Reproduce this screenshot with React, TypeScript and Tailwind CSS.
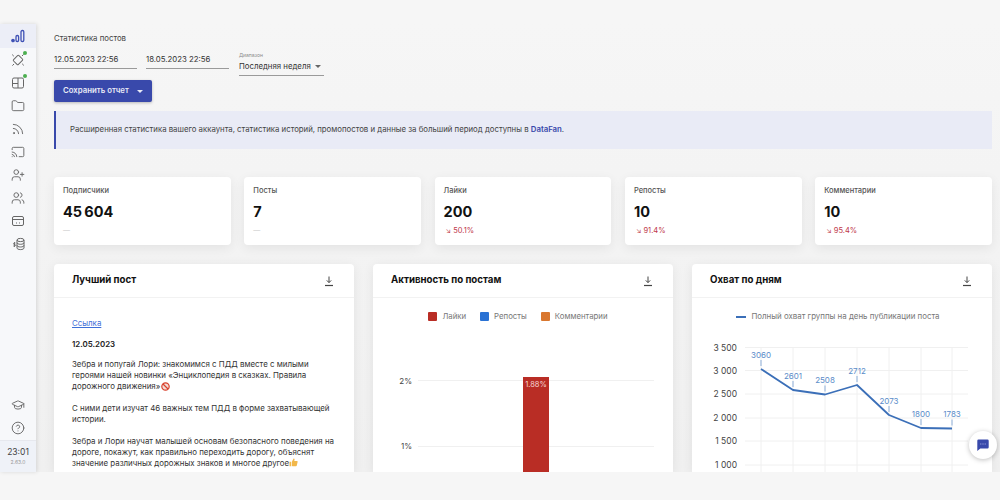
import { CircleHelp, Cast, Folder, GraduationCap, Rss, UserPlus, Users } from 'lucide-react'
import type { ReactNode } from 'react'

const stats = [
  { label: 'Подписчики', value: '45\u2009604', delta: '' },
  { label: 'Посты', value: '7', delta: '' },
  { label: 'Лайки', value: '200', delta: '50.1%' },
  { label: 'Репосты', value: '10', delta: '91.4%' },
  { label: 'Комментарии', value: '10', delta: '95.4%' },
]

const reach = [
  { v: 3060, x: 761, y: 369 },
  { v: 2601, x: 793, y: 390 },
  { v: 2508, x: 825, y: 394.5 },
  { v: 2712, x: 857, y: 385 },
  { v: 2073, x: 889, y: 415 },
  { v: 1800, x: 921, y: 428 },
  { v: 1783, x: 952, y: 428.5 },
]

const ticks = [
  { t: '3 500', y: 347.5 },
  { t: '3 000', y: 370.5 },
  { t: '2 500', y: 394 },
  { t: '2 000', y: 418 },
  { t: '1 500', y: 441 },
  { t: '1 000', y: 465 },
]

function BarsIcon() {
  return (
    <svg width="14" height="14" viewBox="0 0 14 14" fill="none" stroke="#3f51b5" strokeWidth="1.3">
      <circle cx="2" cy="11.5" r="1.2" fill="#3f51b5" />
      <rect x="5" y="6.5" width="2.6" height="6" rx="1.2" />
      <rect x="10" y="1.5" width="2.8" height="11" rx="1.3" />
    </svg>
  )
}

function SatelliteIcon() {
  return (
    <svg width="14" height="14" viewBox="0 0 14 14" fill="none" stroke="#666" strokeWidth="1">
      <rect x="3.6" y="3.2" width="6.8" height="7.6" rx="1" transform="rotate(45 7 7)" />
      <path d="M2.8 3.2 1.2 1.6M11.2 10.8l1.6 1.6M3 11l-1.6 1.6M11 3l1.6-1.6" />
    </svg>
  )
}

function PanelIcon() {
  return (
    <svg width="14" height="14" viewBox="0 0 14 14" fill="none" stroke="#666" strokeWidth="1">
      <rect x="1.5" y="2" width="11" height="10" rx="1.5" />
      <path d="M7 2v10M1.5 7.5H7" />
    </svg>
  )
}

function CardIcon() {
  return (
    <svg width="14" height="14" viewBox="0 0 14 14" fill="none" stroke="#666" strokeWidth="1">
      <rect x="1.5" y="2.5" width="11" height="9" rx="1.5" />
      <path d="M1.5 5.5h11M5 9h1M8 9h1" />
    </svg>
  )
}

function MoneyBaseIcon() {
  return (
    <svg width="15" height="14" viewBox="0 0 15 14" fill="none" stroke="#666" strokeWidth="1">
      <ellipse cx="9.5" cy="3" rx="3.5" ry="1.6" />
      <path d="M6 3v8c0 .9 1.6 1.6 3.5 1.6S13 11.9 13 11V3M6 5.7c0 .9 1.6 1.6 3.5 1.6S13 6.6 13 5.7M6 8.4c0 .9 1.6 1.6 3.5 1.6S13 9.3 13 8.4" />
      <path d="M3.5 5v5M4.5 6H3a.8.8 0 0 0 0 1.5h1a.8.8 0 0 1 0 1.5H2.2" strokeWidth=".8" />
    </svg>
  )
}

function SaveIcon() {
  return (
    <svg width="12" height="12" viewBox="0 0 12 12" fill="none" stroke="#444" strokeWidth="1">
      <path d="M6 1.5v6M3.8 5.4 6 7.6l2.2-2.2" />
      <path d="M2 10.5h8" strokeWidth="1.2" />
    </svg>
  )
}

function ChatIcon() {
  return (
    <svg width="14" height="14" viewBox="0 0 14 14">
      <path d="M2.5 1.5h9a1.2 1.2 0 0 1 1.2 1.2v6.6a1.2 1.2 0 0 1-1.2 1.2H4.3L1.3 13V2.7a1.2 1.2 0 0 1 1.2-1.2z" fill="#3949ab" />
      <path d="M4.3 6h1M6.5 6h1M8.7 6h1" stroke="#aab3e6" strokeWidth="1" />
    </svg>
  )
}

function NavItem({ children, dot, active }: { children: ReactNode; dot?: boolean; active?: boolean }) {
  return (
    <div className={active ? 'relative flex h-[24px] items-center justify-center bg-[#eceef7]' : 'relative flex h-[23px] items-center justify-center'}>
      {children}
      {dot && <span className="absolute right-[9px] top-[3px] h-[4px] w-[4px] rounded-full bg-[#4caf50]" />}
    </div>
  )
}

function NoEntry() {
  return (
    <svg className="ml-[1px] inline-block align-[-2px]" width="9" height="9" viewBox="0 0 9 9" fill="#f3dcd6" stroke="#d9432f" strokeWidth="1.2">
      <circle cx="4.5" cy="4.5" r="3.7" />
      <path d="M2 2l5 5" />
    </svg>
  )
}

function ThumbUp() {
  return (
    <svg className="inline-block align-[-1px]" width="9" height="9" viewBox="0 0 9 9" fill="#f2b84b">
      <path d="M3 3.5 4.6.6c.6-.2 1 .2 1 .8L5.3 3h2.5c.6 0 1 .5.8 1.1L7.8 7.6c-.1.4-.4.6-.8.6H3.5L3 8zM.5 3.7h1.8v4.5H.5z" />
    </svg>
  )
}

function PanelCard({ title, children }: { title: string; children: ReactNode }) {
  return (
    <div className="flex min-w-0 flex-col rounded-t-[4px] bg-white shadow-[0_2px_12px_rgba(0,0,0,0.07)]">
      <div className="flex h-[34px] shrink-0 items-center justify-between border-b border-[#f2f2f2] pl-[18px] pr-[19px]">
        <span className="text-[9.7px] font-bold text-[#111]">{title}</span>
        <SaveIcon />
      </div>
      {children}
    </div>
  )
}

function LegendSwatch({ color, label }: { color: string; label: string }) {
  return (
    <div className="flex items-center gap-[5px]">
      <span className="h-[9px] w-[9px] rounded-[1px]" style={{ backgroundColor: color }} />
      <span>{label}</span>
    </div>
  )
}

export default function App() {
  return (
    <div className="relative flex h-[500px] w-[1000px] flex-col overflow-hidden bg-[#f6f6f6] pt-[24px] pb-[28px] font-['Inter',sans-serif]">
      <div className="flex h-[448px]">
        <aside className="z-10 flex w-[36px] shrink-0 flex-col bg-[#f7f8fa] text-[#666] shadow-[1px_0_4px_rgba(0,0,0,0.12)]">
          <NavItem active><BarsIcon /></NavItem>
          <NavItem dot><SatelliteIcon /></NavItem>
          <NavItem dot><PanelIcon /></NavItem>
          <NavItem><Folder size={14} strokeWidth={1.6} /></NavItem>
          <NavItem><Rss size={14} strokeWidth={1.6} /></NavItem>
          <NavItem><Cast size={14} strokeWidth={1.6} /></NavItem>
          <NavItem><UserPlus size={14} strokeWidth={1.6} /></NavItem>
          <NavItem><Users size={14} strokeWidth={1.6} /></NavItem>
          <NavItem><CardIcon /></NavItem>
          <NavItem><MoneyBaseIcon /></NavItem>
          <div className="mt-auto flex flex-col">
            <NavItem><GraduationCap size={14} strokeWidth={1.6} /></NavItem>
            <NavItem><CircleHelp size={14} strokeWidth={1.6} /></NavItem>
            <div className="mt-[1px] flex h-[32px] flex-col items-center justify-center border-t border-[#e6e8ee] bg-[#eff2f8]">
              <span className="text-[8.5px] leading-[11px] text-[#444]">23:01</span>
              <span className="text-[5px] leading-[8px] text-[#999]">2.63.0</span>
            </div>
          </div>
        </aside>

        <main className="min-w-0 flex-1 overflow-hidden bg-linear-to-b from-[#f6f6f6] to-[#f0f0f0] pl-[18px] pr-[8px] pt-[9px]">
          <div className="text-[7.8px] leading-[10px] text-[#444]">Статистика постов</div>

          <div className="mt-[6px] flex items-start gap-[9px]">
            <div className="mt-[5px] w-[83px] border-b border-[#9a9a9a] pb-[3px] text-[7.8px] leading-[11px] text-[#333]">12.05.2023 22:56</div>
            <div className="mt-[5px] w-[83px] border-b border-[#9a9a9a] pb-[3px] text-[7.8px] leading-[11px] text-[#333]">18.05.2023 22:56</div>
            <div className="ml-[1px] mt-[3px] w-[85px] border-b border-[#9a9a9a] pb-[3px]">
              <div className="text-[5px] leading-[7px] text-[#888]">Диапазон</div>
              <div className="mt-[2px] flex items-center justify-between whitespace-nowrap pr-[3px] text-[7.8px] leading-[11px] text-[#333]">
                Последняя неделя
                <span className="h-0 w-0 border-x-[3.5px] border-t-[3.5px] border-x-transparent border-t-[#666]" />
              </div>
            </div>
          </div>

          <div className="mt-[4px] flex h-[22px] w-[98px] items-center gap-[8px] rounded-[2px] bg-[#3949ab] pl-[9px] text-[7.8px] font-semibold text-[#e8eaf6] shadow-[0_1px_3px_rgba(0,0,0,0.25)]">
            Сохранить отчет
            <span className="h-0 w-0 border-x-[3px] border-t-[3px] border-x-transparent border-t-[#e8eaf6]" />
          </div>

          <div className="mt-[9px] flex h-[38px] items-center border-l-2 border-[#3949ab] bg-[#e9ebf6] pl-[14px] text-[7.8px] text-[#444]">
            <span>
              Расширенная статистика вашего аккаунта, статистика историй, промопостов и данные за больший период доступны в{' '}
              <span className="font-semibold text-[#3949ab]">DataFan</span>.
            </span>
          </div>

          <div className="mt-[28px] grid grid-cols-5 gap-[13.5px]">
            {stats.map(s => (
              <div key={s.label} className="h-[68px] rounded-[4px] bg-white pl-[9px] pt-[9px] shadow-[0_3px_12px_rgba(0,0,0,0.07)]">
                <div className="text-[7.5px] font-medium leading-[10px] text-[#555]">{s.label}</div>
                <div className="mt-[6px] text-[14.5px] font-bold leading-[20px] text-[#111]">{s.value}</div>
                {s.delta ? (
                  <div className="mt-[4px] pl-[2px] text-[7.5px] leading-[10px] text-[#c0394b]">
                    <span className="text-[7px]">↘</span> {s.delta}
                  </div>
                ) : (
                  <div className="mt-[4px] text-[7px] leading-[10px] text-[#ccc]">—</div>
                )}
              </div>
            ))}
          </div>

          <div className="mt-[19px] grid h-[208px] grid-cols-3 gap-[19px]">
            <PanelCard title="Лучший пост">
              <div className="whitespace-nowrap pl-[18px] pt-[20px] text-[7.9px] leading-[11px] text-[#333]">
                <div className="text-[#3f6fd8] underline">Ссылка</div>
                <div className="mt-[10px] font-semibold text-[#222]">12.05.2023</div>
                <p className="mt-[9px]">Зебра и попугай Лори: знакомимся с ПДД вместе с милыми<br />героями нашей новинки «Энциклопедия в сказках. Правила<br />дорожного движения»<NoEntry /></p>
                <p className="mt-[11px]">С ними дети изучат 46 важных тем ПДД в форме захватывающей<br />истории.</p>
                <p className="mt-[11px]">Зебра и Лори научат малышей основам безопасного поведения на<br />дороге, покажут, как правильно переходить дорогу, объяснят<br />значение различных дорожных знаков и многое другое<ThumbUp /></p>
              </div>
            </PanelCard>

            <PanelCard title="Активность по постам">
              <div className="flex h-[32px] shrink-0 items-center justify-center gap-[14px] pr-[10px] pt-[5px] text-[7.8px] text-[#777]">
                <LegendSwatch color="#b92d25" label="Лайки" />
                <LegendSwatch color="#2a72d4" label="Репосты" />
                <LegendSwatch color="#d9772f" label="Комментарии" />
              </div>
              <svg className="block" width="300" height="142" viewBox="373 330 300 142">
                <path d="M418 380.5H654M418 446.5H654" stroke="#f0f0f0" strokeWidth="1" />
                <text x="412" y="383.5" textAnchor="end" fontSize="8" fill="#444">2%</text>
                <text x="412" y="449" textAnchor="end" fontSize="8" fill="#444">1%</text>
                <rect x="523" y="377" width="26" height="95" fill="#b92d25" />
                <text x="536" y="387" textAnchor="middle" fontSize="7.5" fill="#f6d5d2">1.88%</text>
              </svg>
            </PanelCard>

            <PanelCard title="Охват по дням">
              <div className="flex h-[32px] shrink-0 items-center justify-center gap-[5px] pr-[8px] pt-[5px] text-[7.9px] text-[#777]">
                <span className="h-[2px] w-[10px] bg-[#3b6fb8]" />
                <span>Полный охват группы на день публикации поста</span>
              </div>
              <svg className="block" width="300" height="142" viewBox="692 330 300 142">
                {ticks.map(t => (
                  <g key={t.t}>
                    <path d={`M745 ${t.y}H968`} stroke="#f0f0f0" strokeWidth="1" />
                    <text x="737" y={t.y + 3} textAnchor="end" fontSize="8.5" fill="#444">{t.t}</text>
                  </g>
                ))}
                {reach.map(p => (
                  <path key={p.x} d={`M${p.x} 347V472`} stroke="#f0f0f0" strokeWidth="1" />
                ))}
                <polyline points={reach.map(p => `${p.x},${p.y}`).join(' ')} fill="none" stroke="#3b6fb8" strokeWidth="1.8" strokeLinejoin="round" />
                {reach.map(p => (
                  <g key={p.v}>
                    <path d={`M${p.x} ${p.y - 9}V${p.y - 3}`} stroke="#8fb0da" strokeWidth="1" />
                    <text x={p.x} y={p.y - 11.5} textAnchor="middle" fontSize="8" fill="#5b8cc9">{p.v}</text>
                  </g>
                ))}
              </svg>
            </PanelCard>
          </div>
        </main>
      </div>

      <div className="absolute left-[969px] top-[431px] z-20 flex h-[28px] w-[28px] items-center justify-center rounded-full bg-white shadow-[0_1px_5px_rgba(0,0,0,0.25)]">
        <ChatIcon />
      </div>
    </div>
  )
}
